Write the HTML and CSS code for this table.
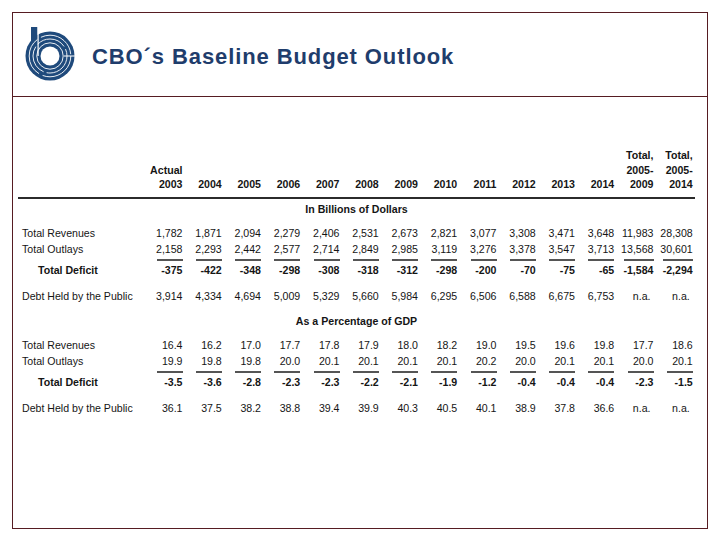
FILE: index.html
```html
<!DOCTYPE html>
<html>
<head>
<meta charset="utf-8">
<link rel="stylesheet" href="styles.css">
</head>
<body>
<div class="frame">
  <div class="header">
    <svg class="logo" width="52" height="54" viewBox="0 0 52 54">
      <circle cx="26" cy="29" r="24.5" fill="#1f4a7c"/>
      <rect x="7" y="0" width="6.5" height="29" fill="#1f4a7c"/>
      <rect x="13.5" y="0" width="1.2" height="29" fill="#fff"/>
      <circle cx="26" cy="29" r="13.2" fill="none" stroke="#fff" stroke-width="0.9"/>
      <circle cx="26" cy="29" r="17" fill="none" stroke="#fff" stroke-width="0.9" stroke-dasharray="30 3"/>
      <circle cx="26" cy="29" r="20.8" fill="none" stroke="#fff" stroke-width="0.9" stroke-dasharray="40 4"/>
      <circle cx="26" cy="29" r="9.5" fill="#fff"/>
      <rect x="40" y="28.5" width="12" height="1" fill="#fff"/>
    </svg>
    <div class="title">CBO´s Baseline Budget Outlook</div>
  </div>
  <div class="table">
    <div class="row hdr">
      <div></div><div></div><div></div><div></div><div></div><div></div><div></div><div></div><div></div><div></div><div></div><div></div><div></div>
      <div>Total,</div><div>Total,</div>
    </div>
    <div class="row hdr">
      <div></div><div>Actual</div><div></div><div></div><div></div><div></div><div></div><div></div><div></div><div></div><div></div><div></div><div></div>
      <div>2005-</div><div>2005-</div>
    </div>
    <div class="row hdr years">
      <div></div><div>2003</div><div>2004</div><div>2005</div><div>2006</div><div>2007</div><div>2008</div><div>2009</div><div>2010</div><div>2011</div><div>2012</div><div>2013</div><div>2014</div><div>2009</div><div>2014</div>
    </div>
    <div class="section">In Billions of Dollars</div>
    <div class="row data first">
      <div class="label">Total Revenues</div><div>1,782</div><div>1,871</div><div>2,094</div><div>2,279</div><div>2,406</div><div>2,531</div><div>2,673</div><div>2,821</div><div>3,077</div><div>3,308</div><div>3,471</div><div>3,648</div><div>11,983</div><div>28,308</div>
    </div>
    <div class="row data">
      <div class="label">Total Outlays</div><div>2,158</div><div>2,293</div><div>2,442</div><div>2,577</div><div>2,714</div><div>2,849</div><div>2,985</div><div>3,119</div><div>3,276</div><div>3,378</div><div>3,547</div><div>3,713</div><div>13,568</div><div>30,601</div>
    </div>
    <div class="row rule">
      <div></div><div><span></span></div><div><span></span></div><div><span></span></div><div><span></span></div><div><span></span></div><div><span></span></div><div><span></span></div><div><span></span></div><div><span></span></div><div><span></span></div><div><span></span></div><div><span></span></div><div><span class="wide"></span></div><div><span class="wide"></span></div>
    </div>
    <div class="row data deficit">
      <div class="label">Total Deficit</div><div>-375</div><div>-422</div><div>-348</div><div>-298</div><div>-308</div><div>-318</div><div>-312</div><div>-298</div><div>-200</div><div>-70</div><div>-75</div><div>-65</div><div>-1,584</div><div>-2,294</div>
    </div>
    <div class="row data debt">
      <div class="label">Debt Held by the Public</div><div>3,914</div><div>4,334</div><div>4,694</div><div>5,009</div><div>5,329</div><div>5,660</div><div>5,984</div><div>6,295</div><div>6,506</div><div>6,588</div><div>6,675</div><div>6,753</div><div class="na">n.a.</div><div class="na">n.a.</div>
    </div>
    <div class="section second">As a Percentage of GDP</div>
    <div class="row data first">
      <div class="label">Total Revenues</div><div>16.4</div><div>16.2</div><div>17.0</div><div>17.7</div><div>17.8</div><div>17.9</div><div>18.0</div><div>18.2</div><div>19.0</div><div>19.5</div><div>19.6</div><div>19.8</div><div>17.7</div><div>18.6</div>
    </div>
    <div class="row data">
      <div class="label">Total Outlays</div><div>19.9</div><div>19.8</div><div>19.8</div><div>20.0</div><div>20.1</div><div>20.1</div><div>20.1</div><div>20.1</div><div>20.2</div><div>20.0</div><div>20.1</div><div>20.1</div><div>20.0</div><div>20.1</div>
    </div>
    <div class="row rule">
      <div></div><div><span></span></div><div><span></span></div><div><span></span></div><div><span></span></div><div><span></span></div><div><span></span></div><div><span></span></div><div><span></span></div><div><span></span></div><div><span></span></div><div><span></span></div><div><span></span></div><div><span></span></div><div><span></span></div>
    </div>
    <div class="row data deficit">
      <div class="label">Total Deficit</div><div>-3.5</div><div>-3.6</div><div>-2.8</div><div>-2.3</div><div>-2.3</div><div>-2.2</div><div>-2.1</div><div>-1.9</div><div>-1.2</div><div>-0.4</div><div>-0.4</div><div>-0.4</div><div>-2.3</div><div>-1.5</div>
    </div>
    <div class="row data debt">
      <div class="label">Debt Held by the Public</div><div>36.1</div><div>37.5</div><div>38.2</div><div>38.8</div><div>39.4</div><div>39.9</div><div>40.3</div><div>40.5</div><div>40.1</div><div>38.9</div><div>37.8</div><div>36.6</div><div class="na">n.a.</div><div class="na">n.a.</div>
    </div>
  </div>
</div>
</body>
</html>
```

FILE: styles.css
```css
* { box-sizing: border-box; }
html, body { margin: 0; padding: 0; background: #fff; }
body { font-family: "Liberation Sans", Arial, sans-serif; color: #151515; }

.frame {
  margin: 12px;
  width: 696px;
  height: 517px;
  border: 1px solid #561c22;
}

.header {
  height: 84px;
  border-bottom: 1px solid #561c22;
  display: flex;
  align-items: center;
  padding-left: 11px;
}
.logo { flex: none; margin-top: -2px; }
.title {
  margin-left: 16px;
  padding-top: 5px;
  font-size: 22px;
  font-weight: bold;
  letter-spacing: 0.9px;
  color: #1f3d6c;
}

.table {
  margin-left: 5px;
  margin-top: 51px;
  width: 677px;
  font-size: 10.6px;
}
.row {
  display: grid;
  grid-template-columns: 125.25px repeat(14, 39.25px);
}
.row > div { text-align: right; white-space: nowrap; }
.row > .label { text-align: left; padding-left: 4px; }

.hdr { height: 14.5px; line-height: 14.5px; font-weight: bold; }
.years { border-bottom: 2px solid #2b2b2b; height: 22px; padding-bottom: 7.5px; }

.section {
  height: 20px;
  line-height: 20px;
  text-align: center;
  font-weight: bold;
}
.section.second { margin-top: 7px; }

.data { height: 16px; line-height: 16px; }
.data.first { margin-top: 6px; }
.deficit { font-weight: bold; }
.deficit > .label { padding-left: 20px; }
.debt { margin-top: 10px; }
.na { padding-right: 3px; }

.rule { height: 5px; }
.rule > div { display: flex; justify-content: flex-end; align-items: flex-start; }
.rule span {
  display: block;
  width: 26px;
  height: 2px;
  margin-top: 1.5px;
  background: #555;
}
.rule span.wide { width: 30px; }
```
